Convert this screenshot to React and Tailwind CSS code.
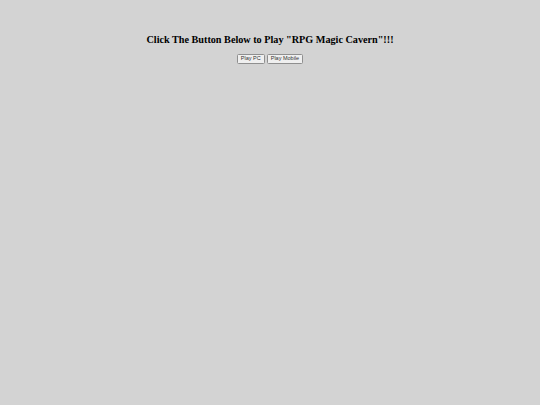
import React from "react";

export default function App() {
  return (
    <div className="w-[540px] h-[405px] bg-[#d3d3d3] overflow-hidden">
      <div className="pt-[34px] flex flex-col items-center">
        <h1 className="text-[10.2px] leading-[12px] font-bold text-black [font-family:'Liberation_Serif',serif]">
          Click The Button Below to Play "RPG Magic Cavern"!!!
        </h1>
        <div className="mt-[8px] flex gap-[2px] [font-family:'Liberation_Sans',sans-serif]">
          <button className="h-[9.5px] px-[3px] text-[5.5px] leading-none bg-[#efefef] border-[0.5px] border-[#8f8f8f] rounded-[1.5px] text-[#333]">
            Play PC
          </button>
          <button className="h-[9.5px] px-[3px] text-[5.5px] leading-none bg-[#efefef] border-[0.5px] border-[#8f8f8f] rounded-[1.5px] text-[#333]">
            Play Mobile
          </button>
        </div>
      </div>
    </div>
  );
}
